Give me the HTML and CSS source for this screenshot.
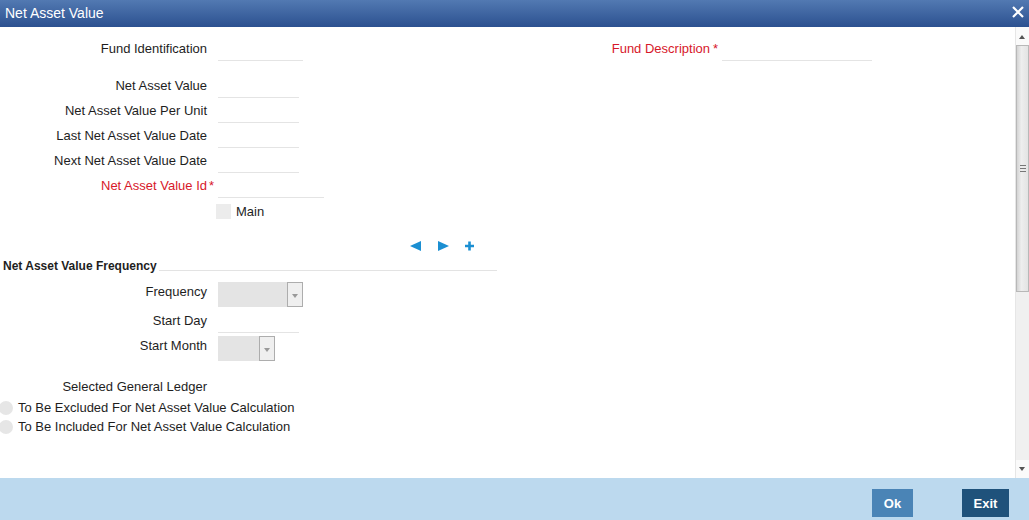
FILE: index.html
```html
<!DOCTYPE html>
<html lang="en">
<head>
  <meta charset="UTF-8" />
  <title>Net Asset Value</title>
  <link rel="stylesheet" href="styles.css">
</head>
<body>
  <header class="titlebar">
    <span class="title">Net Asset Value</span>
    <svg class="close" width="12" height="12" viewBox="0 0 12 12"><path d="M1 1 L11 11 M11 1 L1 11" stroke="#fff" stroke-width="2.2" fill="none"/></svg>
  </header>

  <div class="main">
    <div class="content">
      <div class="row first">
        <div class="field">
          <label>Fund Identification</label>
          <span class="req"></span>
          <div class="input w85"></div>
        </div>
        <div class="field desc">
          <label class="red">Fund Description</label>
          <span class="req">*</span>
          <div class="input w150"></div>
        </div>
      </div>

      <div class="row gap12">
        <label>Net Asset Value</label><span class="req"></span><div class="input w81"></div>
      </div>
      <div class="row">
        <label>Net Asset Value Per Unit</label><span class="req"></span><div class="input w81"></div>
      </div>
      <div class="row">
        <label>Last Net Asset Value Date</label><span class="req"></span><div class="input w81"></div>
      </div>
      <div class="row">
        <label>Next Net Asset Value Date</label><span class="req"></span><div class="input w81"></div>
      </div>
      <div class="row">
        <label class="red">Net Asset Value Id</label><span class="req">*</span><div class="input w106"></div>
      </div>

      <div class="check-row">
        <span class="checkbox"></span><span>Main</span>
      </div>

      <div class="nav-icons">
        <svg width="11" height="10" viewBox="0 0 11 10"><path d="M0 5 L11 0 L11 10 Z" fill="#1b8fd2"/></svg>
        <svg width="11" height="10" viewBox="0 0 11 10"><path d="M11 5 L0 0 L0 10 Z" fill="#1b8fd2"/></svg>
        <svg width="9" height="10" viewBox="0 0 9 10"><path d="M4.5 0.5 V9.5 M0 5 H9" stroke="#1b8fd2" stroke-width="2.6" fill="none"/></svg>
      </div>

      <div class="section">
        <span class="section-title">Net Asset Value Frequency</span>
        <span class="section-line"></span>
      </div>

      <div class="row sel first-sel">
        <label>Frequency</label><span class="req"></span>
        <div class="select w85"><span class="drop"></span></div>
      </div>
      <div class="row day">
        <label>Start Day</label><span class="req"></span><div class="input w81"></div>
      </div>
      <div class="row sel month">
        <label>Start Month</label><span class="req"></span>
        <div class="select w57"><span class="drop"></span></div>
      </div>

      <div class="row ledger">
        <label>Selected General Ledger</label>
      </div>
      <div class="radio-row first-radio">
        <span class="radio"></span><span>To Be Excluded For Net Asset Value Calculation</span>
      </div>
      <div class="radio-row">
        <span class="radio"></span><span>To Be Included For Net Asset Value Calculation</span>
      </div>
    </div>

    <div class="scrollbar">
      <div class="arrow up"></div>
      <div class="thumb"><span class="grip"></span></div>
      <div class="track"></div>
      <div class="arrow down"></div>
    </div>
  </div>

  <footer class="footer">
    <button class="btn ok">Ok</button>
    <button class="btn exit">Exit</button>
  </footer>
</body>
</html>
```

FILE: styles.css
```css
body {
  margin: 0;
  padding: 0;
  font-family: "Liberation Sans", Arial, sans-serif;
  font-size: 13px;
  color: #1e1e1e;
  background: #fff;
  width: 1029px;
  height: 520px;
  overflow: hidden;
}

.titlebar {
  height: 27px;
  background: linear-gradient(to bottom, #5279b2, #2c5190);
  display: flex;
  align-items: center;
  justify-content: space-between;
  padding: 0 5px 1px 5px;
  box-sizing: border-box;
}

.title {
  color: #fff;
  font-size: 14px;
}

.close {
  margin-top: -2px;
}

.main {
  display: flex;
  height: 451px;
}

.content {
  flex: 1;
  padding-top: 9px;
}

/* form rows */
.row {
  display: grid;
  grid-template-columns: 207px 11px auto;
  height: 25px;
  align-items: center;
}

.row label {
  text-align: right;
  white-space: nowrap;
}

.red {
  color: #d7182a;
}

.req {
  color: #d7182a;
  padding-left: 2px;
}

.row.first {
  display: flex;
}

.field {
  display: grid;
  grid-template-columns: 207px 11px auto;
  align-items: center;
  height: 25px;
}

.field label {
  text-align: right;
}

.field.desc {
  grid-template-columns: 150px 12px auto;
  margin-left: 257px;
}

.field.desc .req {
  padding-left: 3px;
}

.gap12 {
  margin-top: 12px;
}

.input {
  height: 24px;
  border-bottom: 1px solid #e4e4e4;
}

.w81 { width: 81px; }
.w85 { width: 85px; }
.w106 { width: 106px; }
.w150 { width: 150px; }
.w57 { width: 57px; }

.check-row {
  display: flex;
  align-items: center;
  height: 25px;
  margin-top: 1px;
  padding-left: 216px;
  gap: 5px;
}

.checkbox {
  width: 15px;
  height: 15px;
  background: #ececec;
}

.nav-icons {
  display: flex;
  align-items: center;
  height: 20px;
  margin-top: 12px;
  padding-left: 410px;
  gap: 17px;
}

.nav-icons svg:last-child {
  margin-left: -1px;
}

.section {
  display: flex;
  align-items: flex-end;
  height: 16px;
  margin-top: 2px;
  width: 497px;
  padding-left: 3px;
  box-sizing: border-box;
}

.section-title {
  font-weight: bold;
  font-size: 12px;
  line-height: 16px;
  white-space: nowrap;
}

.section-line {
  flex: 1;
  border-top: 1px solid #e3e3e3;
  margin-bottom: 3px;
  margin-left: 2px;
}

.row.sel {
  align-items: start;
  line-height: 20px;
}

.first-sel {
  margin-top: 8px;
}

.select {
  height: 25px;
  background: #e4e4e4;
  display: flex;
  justify-content: flex-end;
  box-sizing: border-box;
}

.drop {
  width: 16px;
  height: 25px;
  box-sizing: border-box;
  border: 1px solid #adadad;
  background: #efefef;
  position: relative;
}

.drop::after {
  content: "";
  position: absolute;
  left: 4px;
  top: 11px;
  border-left: 3.5px solid transparent;
  border-right: 3.5px solid transparent;
  border-top: 4px solid #999;
}

.row.day {
  margin-top: 1px;
}

.row.month {
  margin-top: 3px;
}

.row.ledger {
  height: 20px;
  margin-top: 15px;
}

.radio-row {
  display: flex;
  align-items: center;
  height: 19px;
  gap: 5px;
  margin-left: -1px;
}

.first-radio {
  margin-top: 2px;
}

.radio {
  width: 14px;
  height: 14px;
  border-radius: 50%;
  background: #e6e6e6;
}

/* fake scrollbar */
.scrollbar {
  width: 14px;
  display: flex;
  flex-direction: column;
  background: #f0f0f0;
  border-left: 1px solid #e6e6e6;
  box-sizing: border-box;
}

.arrow {
  height: 18px;
  position: relative;
  background: #fafafa;
}

.arrow::after {
  content: "";
  position: absolute;
  left: 3px;
  border-left: 3.5px solid transparent;
  border-right: 3.5px solid transparent;
}

.arrow.up::after {
  top: 8px;
  border-bottom: 4px solid #555;
}

.arrow.down::after {
  top: 7px;
  border-top: 4px solid #555;
}

.thumb {
  height: 247px;
  box-sizing: border-box;
  border: 1px solid #b8b8b8;
  background: linear-gradient(to right, #d4d4d4, #eeeeee 40%, #e3e3e3);
  display: flex;
  align-items: center;
  justify-content: center;
}

.grip {
  width: 6px;
  height: 5px;
  border-top: 1px solid #777;
  border-bottom: 1px solid #777;
  position: relative;
}

.grip::after {
  content: "";
  position: absolute;
  left: 0;
  right: 0;
  top: 2px;
  border-top: 1px solid #777;
}

.track {
  flex: 1;
}

.footer {
  height: 42px;
  background: #bcd9ee;
  display: flex;
  justify-content: flex-end;
  padding: 11px 20px 0 0;
  box-sizing: border-box;
  gap: 49px;
}

.btn {
  height: 28px;
  border: none;
  color: #fff;
  font-family: "Liberation Sans", Arial, sans-serif;
  font-weight: bold;
  font-size: 13px;
  padding: 0;
  cursor: pointer;
}

.btn.ok {
  width: 41px;
  background: #4a84b6;
}

.btn.exit {
  width: 47px;
  background: #1f527b;
}
```
